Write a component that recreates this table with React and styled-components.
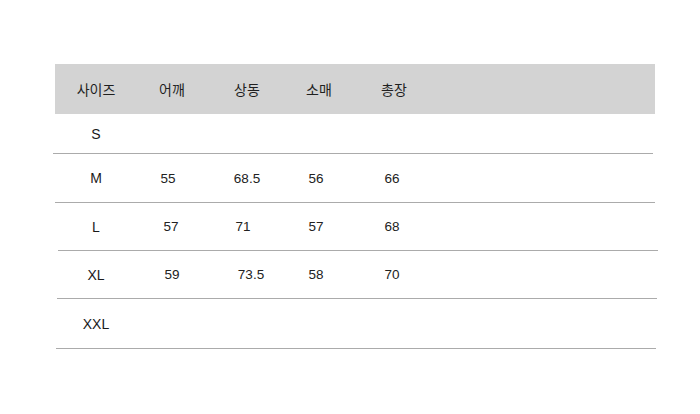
import React from 'react';
import styled, { createGlobalStyle } from 'styled-components';

const GlobalStyle = createGlobalStyle`
    body {
        margin: 0;
        background: #ffffff;
        font-family: "Liberation Sans", "Noto Sans CJK KR", sans-serif;
        color: #222222;
    }
`;

const Page = styled.div`
    width: 700px;
    height: 414px;
    padding: 64px 45px 0 55px;
    box-sizing: border-box;
`;

const Table = styled.div`
    display: flex;
    flex-direction: column;
`;

const Row = styled.div`
    display: grid;
    grid-template-columns: 82px 70px 80px 64px 86px 1fr;
    align-items: center;
    height: ${props => props.height}px;
    box-sizing: border-box;
    font-size: 13.5px;
    background: ${props => props.head ? '#d3d3d3' : 'transparent'};
    border-bottom: ${props => props.head ? 'none' : '1px solid #ababab'};
    margin-left: ${props => props.left || 0}px;
    margin-right: ${props => props.right || 0}px;
`;

const Cell = styled.div`
    text-align: center;
    white-space: nowrap;
    transform: translateX(${props => props.shift || 0}px);
`;

const SizeCell = styled(Cell)`
    font-size: 14px;
    color: #1a1a1a;
`;

const HeadCell = styled(Cell)`
    font-family: "Noto Sans CJK KR", sans-serif;
    font-size: 14px;
    color: #1f1f1f;
`;

const heads = ['사이즈', '어깨', '상동', '소매', '총장'];

const rows = [
    { size: 'S', values: [], height: 40, left: -2, right: 2, shifts: [] },
    { size: 'M', values: ['55', '68.5', '56', '66'], height: 49, left: 0, right: 0, shifts: [-4, 0, -3, -2] },
    { size: 'L', values: ['57', '71', '57', '68'], height: 48, left: 3, right: -3, shifts: [-1, -4, -3, -2] },
    { size: 'XL', values: ['59', '73.5', '58', '70'], height: 48, left: 2, right: -2, shifts: [0, 4, -3, -2] },
    { size: 'XXL', values: [], height: 50, left: 1, right: -1, shifts: [] },
];

function App() {
    return <Page>
        <GlobalStyle />
        <Table>
            <Row head height={50}>
                {heads.map(h => <HeadCell key={h}>{h}</HeadCell>)}
            </Row>
            {rows.map(r => (
                <Row key={r.size} height={r.height} left={r.left} right={r.right}>
                    <SizeCell shift={-r.left}>{r.size}</SizeCell>
                    {r.values.map((v, i) => <Cell key={i} shift={r.shifts[i] - r.left}>{v}</Cell>)}
                </Row>
            ))}
        </Table>
    </Page>;
}

export default App;
